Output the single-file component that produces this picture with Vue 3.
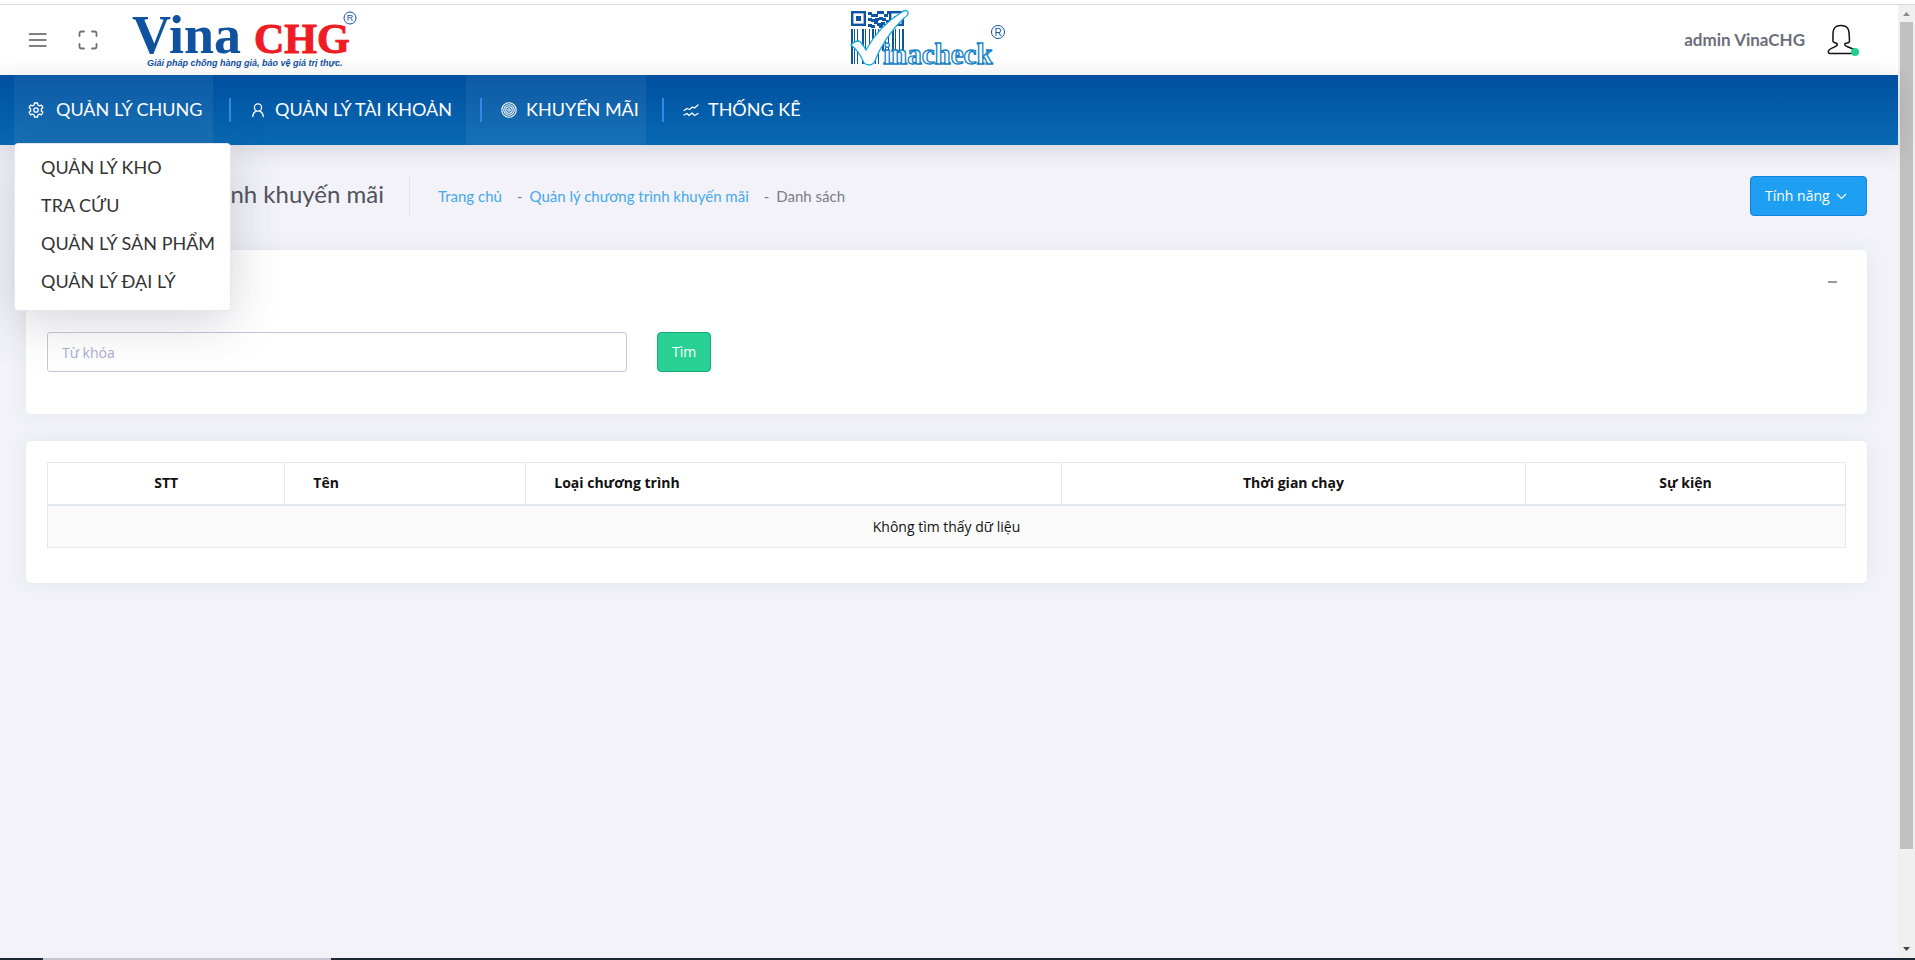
<script setup>
import { ref } from 'vue'

const keyword = ref('')
const submenu = ['QUẢN LÝ KHO', 'TRA CỨU', 'QUẢN LÝ SẢN PHẨM', 'QUẢN LÝ ĐẠI LÝ']
const columns = [
  { name: 'STT', cls: 'c-index' },
  { name: 'Tên', cls: 'c-name' },
  { name: 'Loại chương trình', cls: 'c-type' },
  { name: 'Thời gian chạy', cls: 'c-time' },
  { name: 'Sự kiện', cls: 'c-event' },
]
const qrCells = [
  [17, 2], [20, 4], [26, 1], [29, 1], [33, 4], [36, 1], [23, 4], [17, 8],
  [20, 9], [28, 7], [31, 8], [35, 10], [23, 11], [26, 13], [30, 12], [34, 14],
  [17, 14], [20, 15], [24, 8], [28, 15],
]
const bars = [0, 3, 6, 11, 14, 18, 21, 24, 27, 31, 34, 37, 41, 44, 48, 51]
const barHeight = (x) => (x > 30 ? 22 : 35)
</script>

<template>
  <div class="screen">
    <div class="window">
      <div class="page">
        <header class="topbar">
          <button class="icon-btn" aria-label="Menu">
            <svg width="20" height="20" viewBox="0 0 20 20" fill="none" stroke="#55585f" stroke-width="1.6" stroke-linecap="round">
              <path d="M1.5 4H18M1.5 10H18M1.5 16H18" />
            </svg>
          </button>
          <button class="icon-btn expand" aria-label="Toàn màn hình">
            <svg width="20" height="20" viewBox="0 0 20 20" fill="none" stroke="#6b6f7a" stroke-width="1.8" stroke-linecap="round">
              <path d="M1.5 6V3.5Q1.5 1.5 3.5 1.5H6M14 1.5H16.5Q18.5 1.5 18.5 3.5V6M18.5 14V16.5Q18.5 18.5 16.5 18.5H14M6 18.5H3.5Q1.5 18.5 1.5 16.5V14" />
            </svg>
          </button>
          <a href="#" class="brand" aria-label="Vina CHG">
            <svg width="230" height="60" viewBox="0 0 230 60">
              <text x="1" y="43" class="serif" font-size="54" fill="#0f529f">Vina</text>
              <text x="123" y="43" class="serif chg" font-size="42">CHG</text>
              <circle cx="219" cy="8" r="6" fill="none" stroke="#0f529f" stroke-width="1" />
              <text x="219" y="11" class="mark" font-size="9">R</text>
              <text x="16" y="56" class="slogan">Giải pháp chống hàng giả, bảo vệ giá trị thực.</text>
            </svg>
          </a>
          <a href="#" class="product" aria-label="Vinacheck">
            <svg width="160" height="60" viewBox="0 0 160 60">
              <g fill="none" stroke="#0d55a3" stroke-width="2.4">
                <rect x="2.2" y="2.2" width="12.6" height="12.6" />
                <rect x="40.2" y="2.2" width="12.6" height="12.6" />
              </g>
              <rect x="6" y="6" width="5" height="5" fill="#0d55a3" />
              <rect x="44" y="6" width="5" height="5" fill="#0d55a3" />
              <g fill="#0d55a3">
                <rect v-for="([x, y], i) in qrCells" :key="i" :x="x + 1" :y="y" width="4" height="3" />
                <rect v-for="(x, i) in bars" :key="'b' + x" :x="x + 1" y="19" :width="i % 3 ? 1 : 2" :height="barHeight(x)" />
              </g>
              <path d="M1 35Q4 31 9 31Q12 33 16 40Q29 16 52 2Q56 -1 58 2Q59 5 54 8Q34 27 24 53Q19 57 14 53Q9 41 1 35Z" fill="#fff" stroke="#16a8df" stroke-width="1.3" />
              <text x="33" y="54" class="check">inacheck</text>
              <circle cx="148" cy="22" r="6.5" fill="none" stroke="#0f529f" stroke-width="1" />
              <text x="148" y="26" class="mark" font-size="10">R</text>
            </svg>
          </a>
          <a href="#" class="user">
            <span>admin VinaCHG</span>
            <span class="avatar">
              <svg width="32" height="32" viewBox="0 0 32 32" fill="none" stroke="#111" stroke-width="1.5" stroke-linejoin="round">
                <path d="M6 17.5C6 9 4.500 1.500 14 1.500S22 9 22.500 17.500C22 19.500 19.500 19 18 19.500C17.500 21 18 22 20 22.500L26 25C28 26 28 27.500 27.500 29.500H3Q1 29.500 1.500 27C2 24.500 8 23.500 10 21.500C10.500 20.500 10 19.500 9 19C7.500 18.500 6.500 18.500 6 17.500Z" />
              </svg>
              <i class="status"></i>
            </span>
          </a>
        </header>

        <nav class="nav">
          <div class="nav-item first lit">
            <a href="#" class="nav-link">
              <svg width="16" height="16" viewBox="0 0 16 16" fill="none" stroke="#fff" stroke-width="1.3" stroke-linejoin="round">
                <path d="M6.500 1h3l.4 2 1.500.8 2-.7 1.500 2.500-1.500 1.400v1.900l1.500 1.400-1.500 2.600-2-.7-1.500.8-.4 2h-3l-.4-2-1.500-.8-2 .7-1.500-2.600 1.500-1.400V7L1.100 5.600l1.500-2.500 2 .7L6.100 3z" />
                <circle cx="8" cy="8" r="2.2" />
              </svg>
              <span>QUẢN LÝ CHUNG</span>
            </a>
            <ul class="submenu">
              <li v-for="item in submenu" :key="item"><a href="#">{{ item }}</a></li>
            </ul>
          </div>
          <div class="nav-item">
            <a href="#" class="nav-link">
              <svg width="16" height="16" viewBox="0 0 16 16" fill="none" stroke="#fff" stroke-width="1.3" stroke-linecap="round">
                <circle cx="8" cy="5.5" r="3.6" />
                <path d="M2.800 14.500Q3 10.500 6 9.300M13.200 14.500Q13 10.500 10 9.300" />
              </svg>
              <span>QUẢN LÝ TÀI KHOẢN</span>
            </a>
          </div>
          <div class="nav-item lit">
            <a href="#" class="nav-link">
              <svg width="16" height="16" viewBox="0 0 16 16" fill="none" stroke="#fff" stroke-width="1.1">
                <circle cx="8" cy="8" r="7.2" />
                <circle cx="8" cy="8" r="5.2" />
                <circle cx="8" cy="8" r="3.2" />
                <circle cx="8" cy="8" r="1.2" />
              </svg>
              <span>KHUYẾN MÃI</span>
            </a>
          </div>
          <div class="nav-item">
            <a href="#" class="nav-link">
              <svg width="16" height="16" viewBox="0 0 16 16" fill="none" stroke="#fff" stroke-width="1.3" stroke-linecap="round" stroke-linejoin="round">
                <path d="M1 8.500L4 6.500L6.500 7.500L9.500 5L11.500 6L15 3M1 13L4 11.500L6 13.500L9 11L11.500 13.500L15 11.500" />
              </svg>
              <span>THỐNG KÊ</span>
            </a>
          </div>
        </nav>

        <main class="content">
          <div class="heading">
            <h1>Quản lý chương trình khuyến mãi</h1>
            <ol class="crumbs">
              <li><a href="#">Trang chủ</a></li>
              <li><a href="#">Quản lý chương trình khuyến mãi</a></li>
              <li>Danh sách</li>
            </ol>
            <button class="btn feature">
              Tính năng
              <svg width="11" height="10" viewBox="0 0 11 10" fill="none" stroke="#fff" stroke-width="1.2"><path d="M1 4L5.500 8.500L10 4" /></svg>
            </button>
          </div>

          <section class="card filter">
            <div class="card-tools">
              <button class="icon-btn" aria-label="Thu gọn">
                <svg width="10" height="10" viewBox="0 0 10 10"><path d="M0 5H9" stroke="#555" stroke-width="1.2" /></svg>
              </button>
            </div>
            <form class="search" @submit.prevent>
              <input v-model="keyword" type="text" placeholder="Từ khóa" aria-label="Từ khóa" />
              <button class="btn find">Tìm</button>
            </form>
          </section>

          <section class="card listing">
            <table>
              <thead>
                <tr><th v-for="c in columns" :key="c.name" :class="c.cls">{{ c.name }}</th></tr>
              </thead>
              <tbody>
                <tr><td colspan="5">Không tìm thấy dữ liệu</td></tr>
              </tbody>
            </table>
          </section>
        </main>
      </div>

      <div class="scrollbar">
        <svg width="17" height="17" viewBox="0 0 17 17"><path d="M5 11H12L8.500 7Z" fill="#8b8b8b" /></svg>
        <div class="track"><div class="thumb"></div></div>
        <svg width="17" height="17" viewBox="0 0 17 17"><path d="M5 6H12L8.500 10Z" fill="#444" /></svg>
      </div>
    </div>
    <div class="taskbar"><span class="task"></span></div>
  </div>
</template>

<style>
body {
  margin: 0;
  background: #f2f2f8;
}
</style>

<style scoped>
* {
  box-sizing: border-box;
}
.screen {
  display: flex;
  flex-direction: column;
  min-height: 100vh;
  padding-top: 4px;
  background: #fff;
  font-family: "Open Sans", "Noto Sans", sans-serif;
  font-size: 14px;
  color: #111;
}
a {
  color: inherit;
  text-decoration: none;
}
button {
  font: inherit;
  cursor: pointer;
}
.window {
  display: flex;
  flex: 1;
  border-top: 1px solid #dcdcdc;
}
.page {
  flex: 1;
  min-width: 0;
  background: #f2f2f8;
}
.icon-btn {
  display: flex;
  padding: 0;
  border: 0;
  background: none;
}
.topbar {
  position: relative;
  display: flex;
  align-items: center;
  height: 70px;
  padding: 0 39px 0 28px;
  background: #fff;
}
.expand {
  margin-left: 30px;
}
.brand {
  display: flex;
  margin-left: 33px;
}
.brand svg,
.product svg {
  overflow: visible;
}
.serif {
  font-family: "Liberation Serif", serif;
  font-weight: 700;
}
.chg {
  fill: #ee1c25;
  stroke: #ee1c25;
  stroke-width: 1px;
}
.mark {
  font-family: "Liberation Sans", sans-serif;
  text-anchor: middle;
  fill: #0f529f;
}
.slogan {
  font: italic 700 9px "Liberation Sans", sans-serif;
  fill: #0f529f;
}
.product {
  position: absolute;
  left: calc(50% - 99px);
  display: flex;
}
.check {
  font: 700 29px "Liberation Serif", serif;
  fill: #fff;
  stroke: #1583c8;
  stroke-width: 1.3px;
}
.user {
  display: flex;
  align-items: center;
  gap: 22px;
  margin-left: auto;
  font: 700 17px/20px Lato, sans-serif;
  color: #6c6e7c;
}
.avatar {
  position: relative;
  display: flex;
}
.status {
  position: absolute;
  right: 0;
  bottom: 0;
  width: 8px;
  height: 8px;
  border-radius: 50%;
  background: #1fd08c;
}
.nav {
  position: relative;
  z-index: 2;
  display: grid;
  grid-template-columns: 199px 249px 180px auto;
  justify-content: start;
  gap: 2px;
  height: 70px;
  padding-left: 14px;
  background: linear-gradient(#00509f, #0869b3);
  box-shadow: 0 4px 24px rgba(40, 30, 50, 0.14);
  font-family: Lato, sans-serif;
  font-size: 18px;
  color: #fff;
}
.nav-item {
  position: relative;
  display: flex;
  align-items: center;
  padding-left: 14px;
}
.lit {
  background: rgba(255, 255, 255, 0.06);
}
.nav-link {
  display: flex;
  align-items: center;
  gap: 9px;
  height: 24px;
  padding-left: 19px;
  border-left: 2px solid #3a86e8;
  line-height: 20px;
  white-space: nowrap;
}
.nav-link span {
  padding-bottom: 2px;
}
.first .nav-link {
  gap: 12px;
  padding-left: 0;
  border-left: 0;
}
.submenu {
  position: absolute;
  top: 68px;
  left: 0;
  width: 217px;
  margin: 0;
  padding: 4px 0 10px 26px;
  list-style: none;
  border: 1px solid #e6e6ee;
  border-radius: 4px;
  background: #fff;
  box-shadow: 0 10px 50px rgba(60, 60, 80, 0.22);
  color: #333;
  line-height: 38px;
  white-space: nowrap;
}
.content {
  padding: 31px 31px 31px 26px;
}
.heading {
  display: flex;
  align-items: center;
  height: 40px;
  font-family: Lato, sans-serif;
}
h1 {
  width: 384px;
  height: 40px;
  margin: 0;
  padding-right: 25px;
  border-right: 1px solid #e2e3ec;
  font-size: 24px;
  font-weight: 400;
  line-height: 36px;
  text-align: right;
  white-space: nowrap;
  color: #50525c;
}
.crumbs {
  display: flex;
  margin: 0;
  padding: 0 0 0 28px;
  list-style: none;
  font-size: 15px;
  color: #7b7d88;
}
.crumbs a {
  color: #45a9ec;
}
.crumbs li + li::before {
  content: "-";
  margin: 0 7px 0 15px;
}
.btn {
  height: 40px;
  border: 1px solid;
  border-radius: 4px;
  font-family: "Open Sans", sans-serif;
  color: #fff;
}
.feature {
  display: flex;
  align-items: center;
  gap: 6px;
  width: 117px;
  margin-left: auto;
  padding: 0 14px 2px;
  background: #1e9ff2;
  border-color: #0f84d8;
}
.card {
  border-radius: 5px;
  background: #fff;
  box-shadow: 0 0 20px rgba(80, 80, 120, 0.08);
}
.filter {
  margin-top: 34px;
  padding: 27px 21px 42px;
}
.card-tools {
  display: flex;
  justify-content: flex-end;
  padding-right: 8px;
}
.search {
  display: flex;
  gap: 30px;
  margin-top: 45px;
}
.search input {
  width: 32.25%;
  height: 40px;
  padding: 0 14px;
  border: 1px solid #c5c7d8;
  border-radius: 3px;
  background: transparent;
  font: inherit;
}
.search input::placeholder {
  color: #a9afcf;
}
.find {
  width: 54px;
  padding: 0 0 2px;
  background: #28d094;
  border-color: #17ab75;
}
.listing {
  margin-top: 27px;
  padding: 21px 21px 35px;
}
table {
  width: 100%;
  table-layout: fixed;
  border-collapse: collapse;
  border: 1px solid #e6e8ee;
  line-height: 20px;
}
th {
  padding: 10px 28px 11px;
  border: 1px solid #e6e8ee;
  border-bottom: 2px solid #e3e7f0;
  font-weight: 700;
}
.c-index { width: 13.2%; }
.c-name { width: 13.4%; text-align: left; }
.c-type { width: 29.8%; text-align: left; }
.c-time { width: 25.8%; }
.c-event { width: 17.8%; }
td {
  padding: 11px 28px 10px;
  background: #fafafa;
  text-align: center;
}
.scrollbar {
  display: flex;
  flex-direction: column;
  width: 17px;
  background: #f0f0f0;
}
.track {
  flex: 1;
  padding: 0 2px;
}
.thumb {
  height: 90%;
  background: #c1c1c1;
}
.taskbar {
  height: 2px;
  padding-left: 43px;
  background: #1d2733;
}
.task {
  display: block;
  width: 288px;
  height: 2px;
  background: #c6c6d0;
}
</style>
